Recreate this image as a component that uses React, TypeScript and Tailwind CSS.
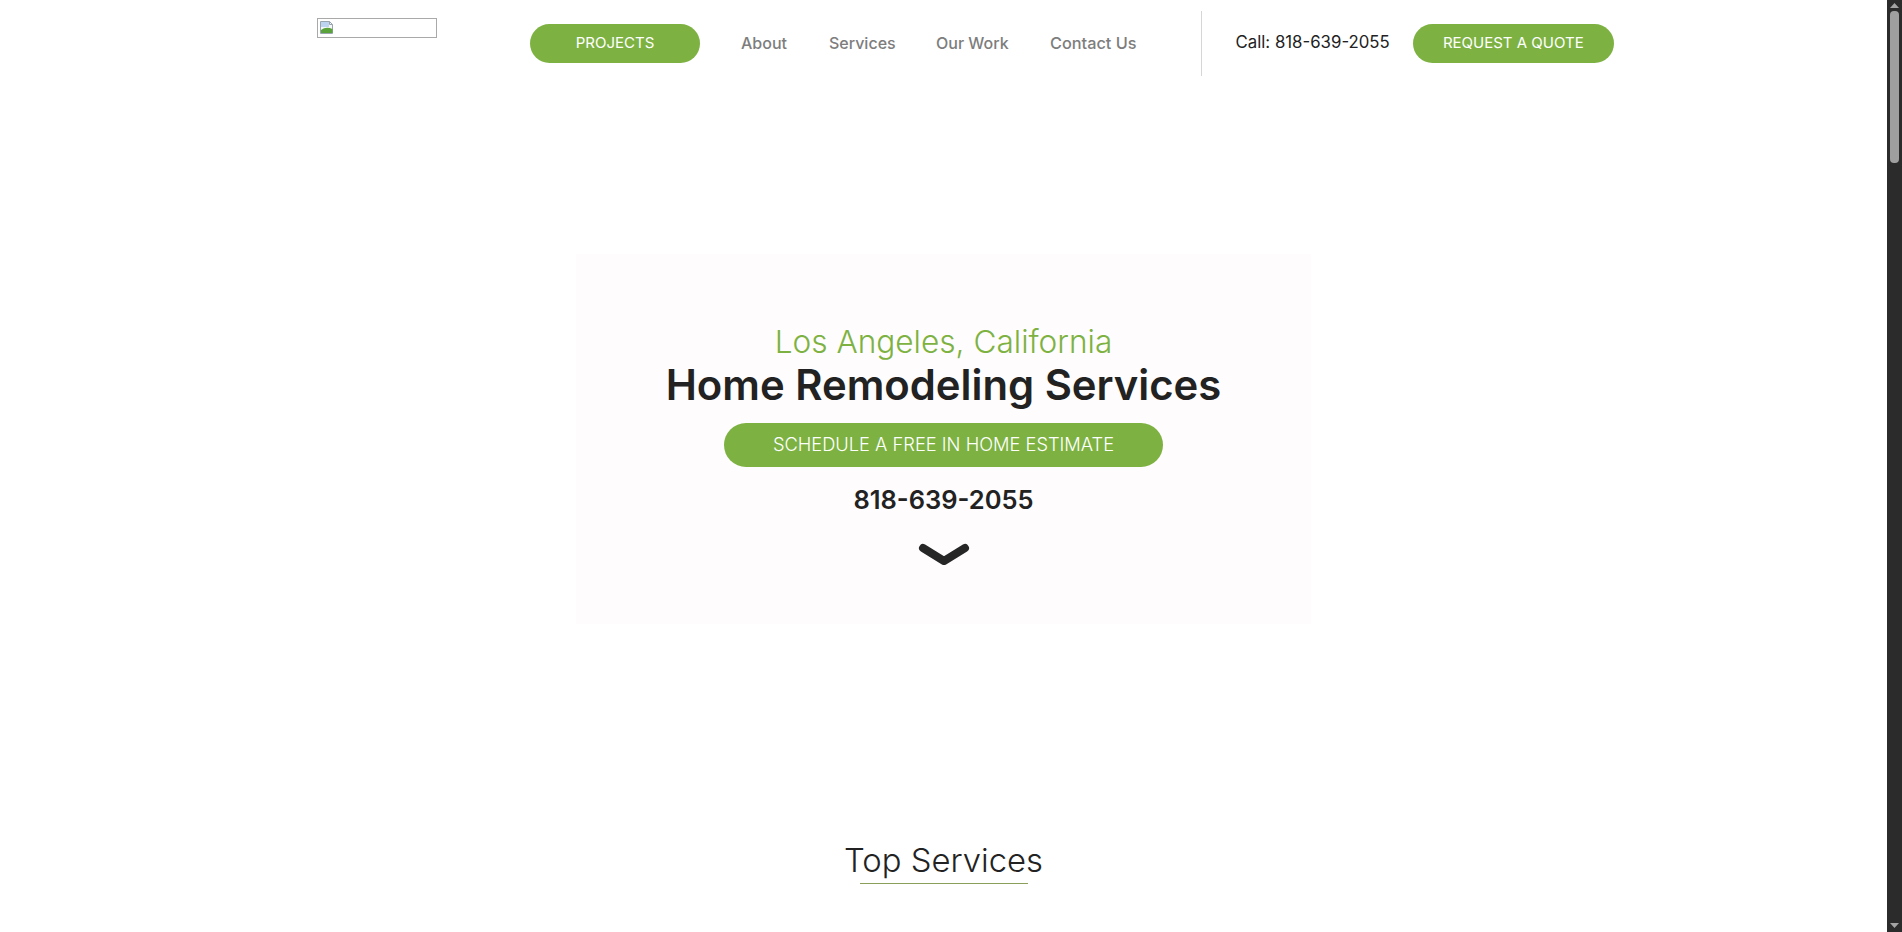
import React from "react";

const font = { fontFamily: "Inter, 'Open Sans', 'Liberation Sans', sans-serif" };

function BrokenImage() {
  return (
    <div className="mt-[18px] h-[20px] w-[120px] border border-[#a9a9a9] relative shrink-0">
      <svg className="absolute left-[1px] top-[1px]" width="16" height="16" viewBox="0 0 16 16">
        <path d="M1.5 1.5h9l3 3v9h-12z" fill="#f4f6f8" stroke="#9aa4ae" />
        <path d="M2 2h8v5H2z" fill="#bcd4f0" />
        <path d="M2 13 L2 10 Q7 6 13.5 9 L13.5 13z" fill="#5aa33a" />
        <path d="M10.5 1.5v3h3" fill="none" stroke="#9aa4ae" />
      </svg>
    </div>
  );
}

function FakeScrollbar() {
  return (
    <div className="flex h-screen w-[15px] shrink-0 flex-col items-center bg-[#2b2b2b]">
      <svg className="mt-[3px]" width="9" height="5" viewBox="0 0 9 5">
        <path d="M0 5 L4.5 0 L9 5z" fill="#a3a3a3" />
      </svg>
      <div className="mt-[3px] h-[152px] w-[9px] rounded-[4px] bg-[#9f9f9f]" />
      <div className="flex-1" />
      <svg className="mb-[4px]" width="9" height="5" viewBox="0 0 9 5">
        <path d="M0 0 L4.5 5 L9 0z" fill="#a3a3a3" />
      </svg>
    </div>
  );
}

export default function App() {
  return (
    <div className="flex h-screen overflow-hidden bg-white">
      <div className="h-screen flex-1 overflow-hidden bg-white text-[#222]" style={font}>
        <header className="flex h-[86px] items-center pl-[317px]">
          <div className="self-start">
            <BrokenImage />
          </div>
          <a className="ml-[93px] flex h-[39px] w-[170px] items-center justify-center rounded-full bg-[#7db242] text-[15px] text-white">
            PROJECTS
          </a>
          <nav className="ml-[41px] flex items-center text-[16px] font-medium text-[#7d7d7d]">
            <a className="w-[88px]">About</a>
            <a className="w-[107px]">Services</a>
            <a className="w-[114px]">Our Work</a>
            <a className="text-[16.3px]">Contact Us</a>
          </nav>
          <div className="ml-[64px] h-[65px] w-px bg-[#d6d6d6]" />
          <div className="ml-[34px] text-[16.8px] text-[#222]">Call: 818-639-2055</div>
          <a className="ml-[23px] flex h-[39px] w-[201px] items-center justify-center rounded-full bg-[#7db242] text-[15px] text-white">
            REQUEST A QUOTE
          </a>
        </header>

        <section className="mx-auto mt-[168px] flex h-[370px] w-[735px] flex-col items-center bg-[#fefcfc] pt-[68px]">
          <div className="text-[31.6px] font-light leading-[40px] text-[#7db242]">Los Angeles, California</div>
          <h1 className="text-[41.8px] font-semibold leading-[46px] text-[#222]">Home Remodeling Services</h1>
          <a className="mt-[15px] flex h-[44px] w-[439px] items-center justify-center rounded-full bg-[#7db242] text-[18.3px] font-light text-white">
            SCHEDULE A FREE IN HOME ESTIMATE
          </a>
          <div className="mt-[17px] text-[25.5px] font-semibold leading-[32px] text-[#222]">818-639-2055</div>
          <svg className="mt-[27px]" width="52" height="24" viewBox="0 0 52 24">
            <path d="M5 5 L26 18 L47 5" fill="none" stroke="#262626" strokeWidth="8" strokeLinecap="round" strokeLinejoin="round" />
          </svg>
        </section>

        <section className="mt-[214px] flex flex-col items-center">
          <h2 className="text-[32.8px] font-light leading-[44px] text-[#222]">Top Services</h2>
          <div className="mt-[1px] h-px w-[168px] bg-[#8aa05a]" />
        </section>
      </div>
      <FakeScrollbar />
    </div>
  );
}
